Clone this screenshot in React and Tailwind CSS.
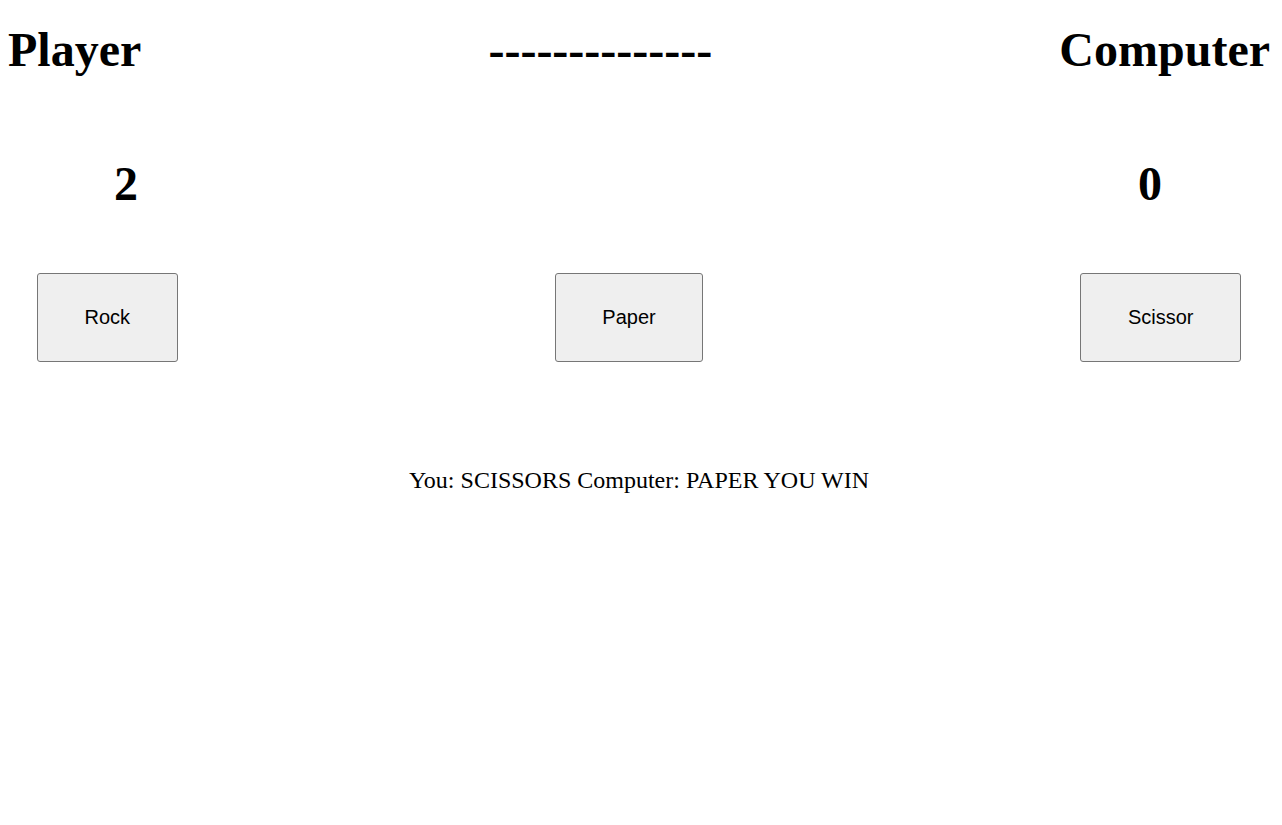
export default function App() {
  const serif = { fontFamily: '"Liberation Serif", "Times New Roman", serif' };
  return (
    <div className="min-h-[825px] bg-white text-black px-2" style={serif}>
      <div className="flex justify-between pt-[26px] pr-[4px] text-[48px] font-bold leading-none">
        <h1>Player</h1>
        <h1>--------------</h1>
        <h1>Computer</h1>
      </div>
      <div className="flex justify-between pt-[86px] pl-[106px] pr-[112px] text-[48px] font-bold leading-none">
        <div>2</div>
        <div>0</div>
      </div>
      <div className="flex justify-between items-start pt-[65px] pl-[29px] pr-[33px]">
        {["Rock", "Paper", "Scissor"].map((t) => (
          <button
            key={t}
            className="px-[46.5px] py-8 text-[20px] leading-[23px] text-black bg-[#efefef] border border-[#767676] rounded-[3px]"
            style={{ fontFamily: '"Liberation Sans", Arial, sans-serif' }}
          >
            {t}
          </button>
        ))}
      </div>
      <div className="pt-[106px] pr-1 text-center text-[24px] leading-none">
        You: SCISSORS Computer: PAPER YOU WIN
      </div>
    </div>
  );
}
